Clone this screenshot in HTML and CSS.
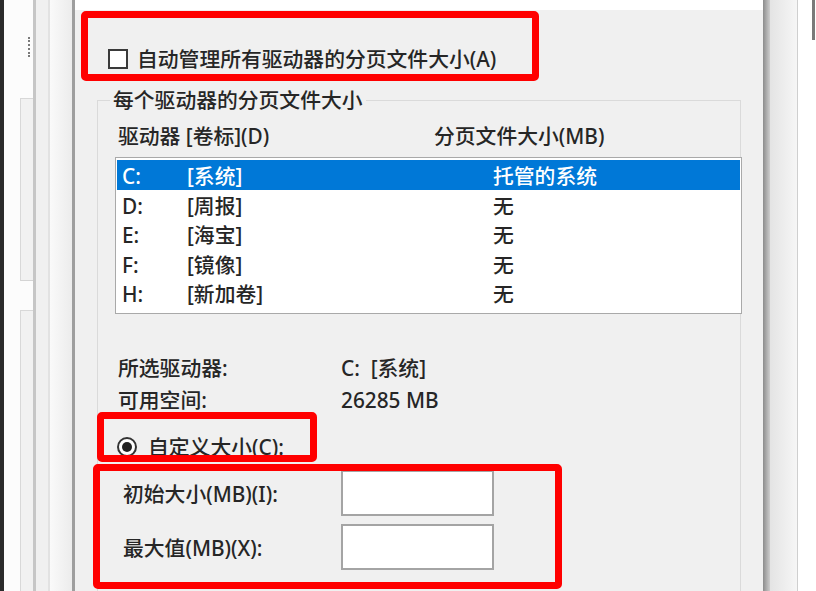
FILE: index.html
```html
<!DOCTYPE html>
<html lang="zh-CN">
<head>
  <meta charset="UTF-8">
  <title>虚拟内存</title>
  <link rel="stylesheet" href="styles.css">
</head>
<body>
  <div class="screen">
    <div class="edge-dark"></div>

    <div class="side">
      <div class="side-col side-col-a">
        <span class="side-mark"></span>
        <div class="side-panel side-panel-top"></div>
        <div class="side-panel side-panel-bottom"></div>
      </div>
      <div class="side-col side-col-b"></div>
      <div class="side-col side-col-c"></div>
    </div>

    <div class="dialog">
      <label class="auto-row">
        <span class="checkbox"></span>
        <span>自动管理所有驱动器的分页文件大小(A)</span>
      </label>

      <div class="group">
        <div class="group-title">每个驱动器的分页文件大小</div>

        <div class="list-head">
          <span>驱动器 [卷标](D)</span>
          <span>分页文件大小(MB)</span>
        </div>

        <div class="drive-list">
          <div class="drive-row selected">
            <span>C:</span><span>[系统]</span><span>托管的系统</span>
          </div>
          <div class="drive-row">
            <span>D:</span><span>[周报]</span><span>无</span>
          </div>
          <div class="drive-row">
            <span>E:</span><span>[海宝]</span><span>无</span>
          </div>
          <div class="drive-row">
            <span>F:</span><span>[镜像]</span><span>无</span>
          </div>
          <div class="drive-row">
            <span>H:</span><span>[新加卷]</span><span>无</span>
          </div>
        </div>

        <div class="info">
          <span>所选驱动器:</span><span>C:&nbsp;&nbsp;[系统]</span>
          <span>可用空间:</span><span>26285 MB</span>
        </div>

        <label class="radio-row">
          <span class="radio"></span>
          <span>自定义大小(C):</span>
        </label>

        <div class="size-rows">
          <span>初始大小(MB)(I):</span>
          <input class="size-input" type="text">
          <span>最大值(MB)(X):</span>
          <input class="size-input" type="text">
        </div>
      </div>
    </div>

    <div class="frame-right">
      <div class="frame-shadow"></div>
      <div class="frame-strip"></div>
      <div class="frame-outer"><span class="outer-mark"></span></div>
    </div>

    <!-- red annotation boxes -->
    <div class="mark mark-auto"></div>
    <div class="mark mark-custom"></div>
    <div class="mark mark-size"></div>
  </div>
</body>
</html>
```

FILE: styles.css
```css
body {
  margin: 0;
  background: #f0f0f0;
}
.screen {
  position: relative;
  display: flex;
  width: 816px;
  height: 591px;
  overflow: hidden;
  font-family: "Noto Sans", "Noto Sans CJK SC", sans-serif;
  font-size: 20.8px;
  font-weight: 500;
  color: #262626;
}
.edge-dark {
  width: 4px;
  background: #2b2b2b;
}
.side {
  display: flex;
}
.side-col {
  display: flex;
  flex-direction: column;
}
.side-col-a {
  width: 29px;
  background: #fcfcfc;
  border-right: 3px solid #c6c6c6;
}
.side-mark {
  align-self: flex-end;
  width: 2px;
  height: 20px;
  margin: 37px 1px 0 0;
  border-left: 2px dotted #7a7a7a;
}
.side-panel {
  margin-left: 16px;
  background: #f1f1f1;
  border-top: 1px solid #d8d8d8;
  border-left: 1px solid #d8d8d8;
}
.side-panel-top {
  margin-top: 41px;
  height: 181px;
  border-bottom: 1px solid #d4d4d4;
}
.side-panel-bottom {
  margin-top: 29px;
  flex: 1;
}
.side-col-b {
  width: 12px;
  background: #f0f0f0;
  border-right: 2px solid #e2e2e2;
}
.side-col-c {
  width: 22px;
  background: linear-gradient(to right, #fafafa, #ececec);
  border-right: 3px solid #9e9e9e;
}

.dialog {
  width: 688px;
  box-sizing: border-box;
  padding-left: 22px;
  background: #f0f0f0;
  border-top: 10px solid #fff;
}
.auto-row {
  display: flex;
  align-items: center;
  gap: 9px;
  margin-top: 37px;
  padding-left: 11px;
  line-height: 24px;
}
.checkbox {
  width: 20px;
  height: 20px;
  box-sizing: border-box;
  border: 2px solid #3a3a3a;
  background: #fff;
}

.group {
  width: 644px;
  height: 600px;
  box-sizing: border-box;
  margin-top: 29px;
  border: 1px solid #dadada;
  border-bottom: none;
}
.group-title {
  width: fit-content;
  margin: -13px 0 0 12px;
  padding: 0 3px;
  background: #f0f0f0;
  line-height: 24px;
}
.list-head {
  display: grid;
  grid-template-columns: 316px auto;
  margin-top: 12px;
  padding-left: 20px;
  line-height: 24px;
}
.drive-list {
  width: 627px;
  box-sizing: border-box;
  margin: 9px 0 0 17px;
  padding: 2px 1px 5.5px;
  background: #fff;
  border: 1px solid #a9a9a9;
}
.drive-row {
  display: grid;
  grid-template-columns: 65px 306px 1fr;
  height: 29.5px;
  box-sizing: border-box;
  padding: 4px 0 0 5px;
  line-height: 25.5px;
}
.drive-row.selected {
  background: #0078d7;
  color: #fff;
}
.info {
  display: grid;
  grid-template-columns: 223px auto;
  margin-top: 38px;
  padding-left: 20px;
  line-height: 32px;
}
.radio-row {
  display: flex;
  align-items: center;
  gap: 11px;
  margin-top: 19px;
  padding-left: 19px;
  line-height: 24px;
}
.radio {
  position: relative;
  width: 20px;
  height: 20px;
  box-sizing: border-box;
  border: 2px solid #333;
  border-radius: 50%;
  background: #fff;
}
.radio::after {
  content: "";
  position: absolute;
  left: 3px;
  top: 3px;
  width: 10px;
  height: 10px;
  border-radius: 50%;
  background: #222;
}
.size-rows {
  display: grid;
  grid-template-columns: 218px 153px;
  row-gap: 8px;
  align-items: center;
  margin-top: 11px;
  padding-left: 25px;
}
.size-input {
  width: 153px;
  height: 46px;
  box-sizing: border-box;
  margin: 0;
  border: 2px solid #a4a4a4;
  background: #fff;
  font: inherit;
}

.frame-right {
  display: flex;
}
.frame-shadow {
  width: 7px;
  background: linear-gradient(to right, #8c8c8c, #cdcdcd);
}
.frame-strip {
  width: 27px;
  background: linear-gradient(to right, #e4e4e4, #f6f6f6);
  border-right: 1px solid #cfcfcf;
}
.frame-outer {
  width: 18px;
  background: #fff;
}
.outer-mark {
  display: block;
  width: 3px;
  height: 40px;
  margin-left: 14px;
  background: #7a7a7a;
}

.mark {
  position: absolute;
  box-sizing: border-box;
  border: 7px solid #ff0000;
  border-radius: 5px;
}
.mark-auto {
  left: 81px;
  top: 11px;
  width: 458px;
  height: 70px;
}
.mark-custom {
  left: 97px;
  top: 412px;
  width: 220px;
  height: 50px;
}
.mark-size {
  left: 93px;
  top: 464px;
  width: 469px;
  height: 125px;
}
```
